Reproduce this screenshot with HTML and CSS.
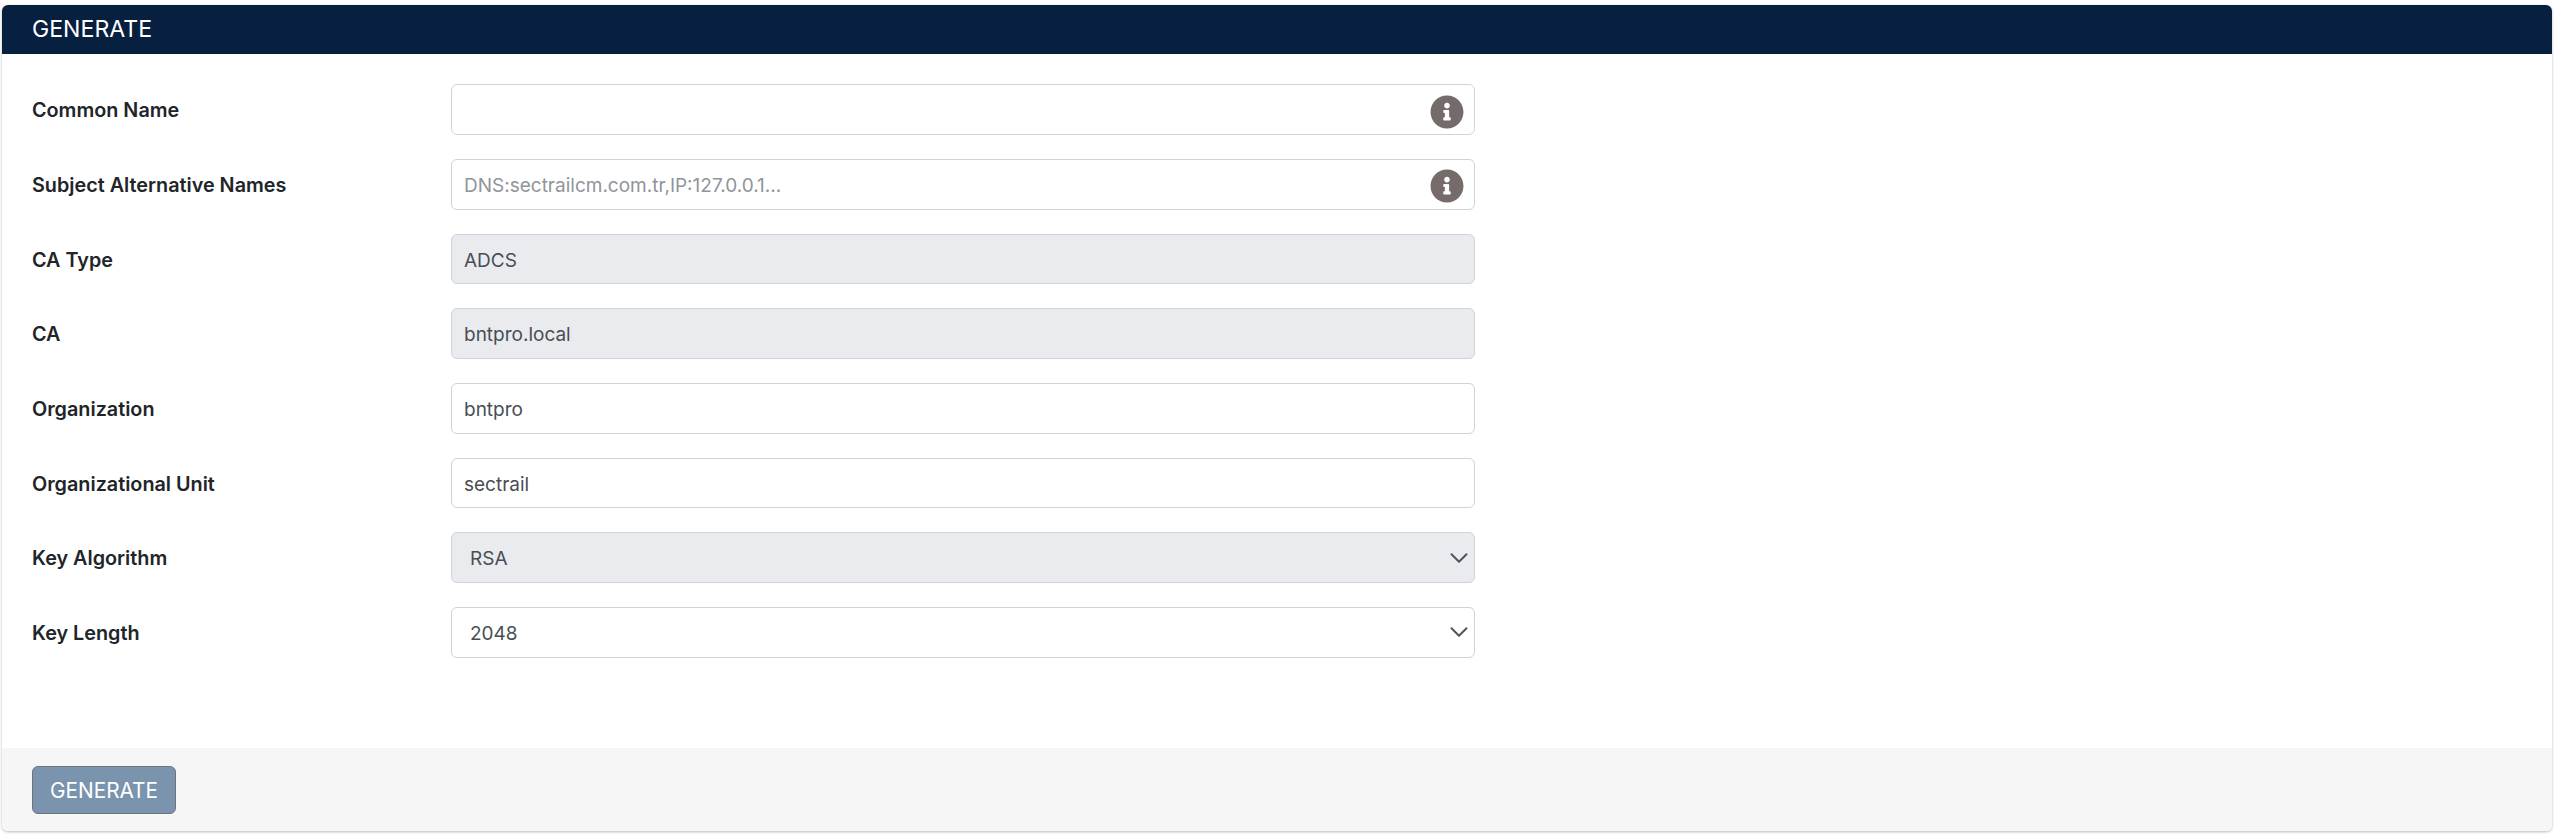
FILE: index.html
```html
<!DOCTYPE html>
<html lang="en">
<head>
<meta charset="utf-8">
<title>Generate</title>
<link rel="stylesheet" href="styles.css">
</head>
<body>
<section class="card">
  <header class="card-header">GENERATE</header>
  <form class="card-body">
    <div class="row">
      <label class="row-label">Common Name</label>
      <div class="field">
        <input class="control" type="text">
        <svg class="info" viewBox="0 0 512 512" aria-hidden="true"><path d="M256 8C119.043 8 8 119.083 8 256c0 136.997 111.043 248 248 248s248-111.003 248-248C504 119.083 392.957 8 256 8zm0 110c23.196 0 42 18.804 42 42s-18.804 42-42 42-42-18.804-42-42 18.804-42 42-42zm56 254c0 6.627-5.373 12-12 12h-88c-6.627 0-12-5.373-12-12v-24c0-6.627 5.373-12 12-12h12v-64h-12c-6.627 0-12-5.373-12-12v-24c0-6.627 5.373-12 12-12h64c6.627 0 12 5.373 12 12v100h12c6.627 0 12 5.373 12 12v24z"/></svg>
      </div>
    </div>
    <div class="row">
      <label class="row-label">Subject Alternative Names</label>
      <div class="field">
        <input class="control" type="text" placeholder="DNS:sectrailcm.com.tr,IP:127.0.0.1...">
        <svg class="info" viewBox="0 0 512 512" aria-hidden="true"><path d="M256 8C119.043 8 8 119.083 8 256c0 136.997 111.043 248 248 248s248-111.003 248-248C504 119.083 392.957 8 256 8zm0 110c23.196 0 42 18.804 42 42s-18.804 42-42 42-42-18.804-42-42 18.804-42 42-42zm56 254c0 6.627-5.373 12-12 12h-88c-6.627 0-12-5.373-12-12v-24c0-6.627 5.373-12 12-12h12v-64h-12c-6.627 0-12-5.373-12-12v-24c0-6.627 5.373-12 12-12h64c6.627 0 12 5.373 12 12v100h12c6.627 0 12 5.373 12 12v24z"/></svg>
      </div>
    </div>
    <div class="row">
      <label class="row-label">CA Type</label>
      <div class="field"><input class="control" type="text" value="ADCS" disabled></div>
    </div>
    <div class="row">
      <label class="row-label">CA</label>
      <div class="field"><input class="control" type="text" value="bntpro.local" disabled></div>
    </div>
    <div class="row">
      <label class="row-label">Organization</label>
      <div class="field"><input class="control" type="text" value="bntpro"></div>
    </div>
    <div class="row">
      <label class="row-label">Organizational Unit</label>
      <div class="field"><input class="control" type="text" value="sectrail"></div>
    </div>
    <div class="row">
      <label class="row-label">Key Algorithm</label>
      <div class="field">
        <select class="control select" disabled><option>RSA</option></select>
        <svg class="chevron" viewBox="0 0 16 16" aria-hidden="true"><path d="M2 5l6 6 6-6"/></svg>
      </div>
    </div>
    <div class="row">
      <label class="row-label">Key Length</label>
      <div class="field">
        <select class="control select"><option>2048</option></select>
        <svg class="chevron" viewBox="0 0 16 16" aria-hidden="true"><path d="M2 5l6 6 6-6"/></svg>
      </div>
    </div>
  </form>
  <footer class="card-footer">
    <button class="btn" type="button" disabled>GENERATE</button>
  </footer>
</section>
</body>
</html>
```
FILE: styles.css
```css
* { box-sizing: border-box; }
html, body { height: 100%; }
body {
  margin: 0;
  padding: 5px 2px 9px;
  background: #fff;
  font-family: Inter, "Liberation Sans", sans-serif;
  color: #212529;
}
.card {
  height: 826px;
  display: flex;
  flex-direction: column;
  border-radius: 6px;
  background: #fff;
  box-shadow: 0 1px 3px rgba(0, 0, 0, 0.28);
  overflow: hidden;
}
.card-header {
  height: 49px;
  flex: none;
  display: flex;
  align-items: center;
  padding-left: 30px;
  background: #08203f;
  color: #fff;
  font-size: 23.1px;
  line-height: 1;
}
.card-body {
  flex: 1;
  display: flex;
  flex-direction: column;
  gap: 24px;
  padding: 30.4px 0 0 30px;
}
.row {
  display: flex;
  align-items: center;
  height: 50.67px;
}
.row-label {
  width: 419px;
  flex: none;
  padding-top: 1px;
  font-size: 19.8px;
  font-weight: 600;
  color: #212529;
}
.field {
  position: relative;
  width: 1024px;
  height: 100%;
}
.control {
  display: block;
  width: 100%;
  height: 100%;
  padding: 2px 12px 0;
  border: 1.5px solid #ced4da;
  border-radius: 6px;
  background: #fff;
  font-family: inherit;
  font-size: 19px;
  color: #484e54;
  outline: none;
  opacity: 1;
}
.control::placeholder { color: #8f959b; opacity: 1; }
.control:disabled { background: #e9ebef; }
.select {
  appearance: none;
  padding-left: 18px;
}
.info {
  position: absolute;
  right: 10.7px;
  top: 10.2px;
  width: 34px;
  height: 34px;
  fill: #766b6b;
}
.chevron {
  position: absolute;
  right: 6px;
  top: 15.5px;
  width: 20px;
  height: 20px;
  fill: none;
  stroke: #50555b;
  stroke-width: 1.6;
  stroke-linecap: round;
  stroke-linejoin: round;
}
.card-footer {
  height: 83.4px;
  flex: none;
  padding: 18px 0 0 30px;
  background: #f6f6f6;
}
.btn {
  display: block;
  width: 144px;
  height: 48px;
  padding: 1px 0 0;
  border: 1.5px solid #6c757d;
  border-radius: 6px;
  background: #7a94ae;
  color: #fff;
  font-family: inherit;
  font-size: 20.8px;
}
```
